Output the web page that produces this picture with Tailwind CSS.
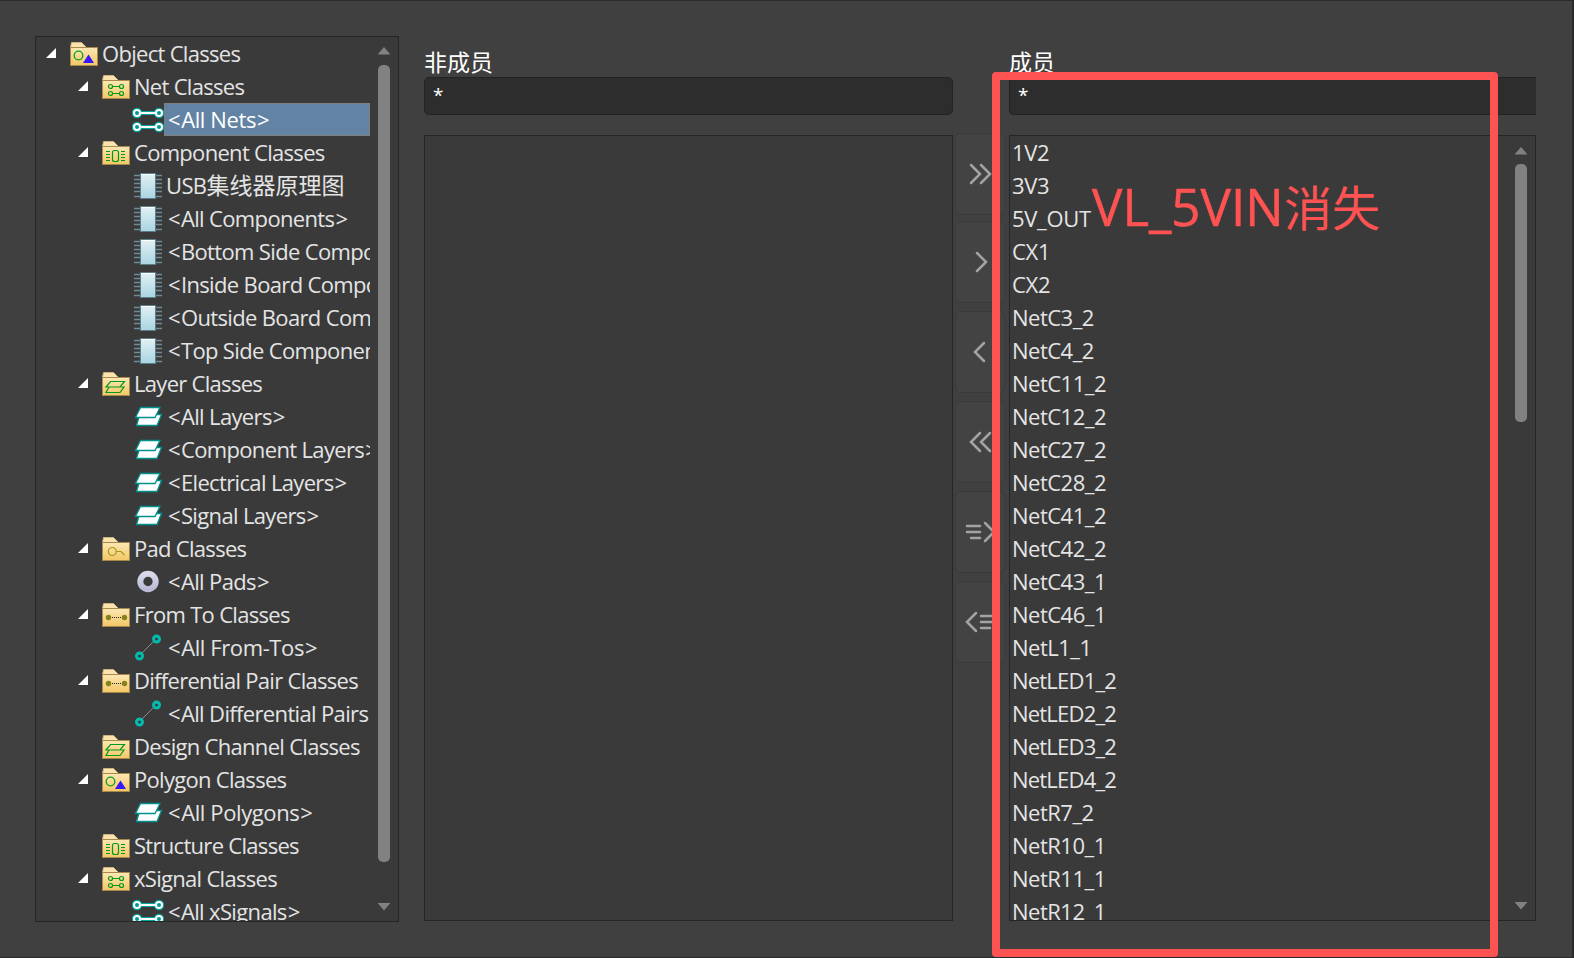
<!DOCTYPE html>
<html lang="zh">

<head>
  <meta charset="UTF-8">
  <meta name="viewport" content="width=device-width, initial-scale=1.0">
  <title>Object Class Explorer</title>
  <script src="https://cdn.jsdelivr.net/npm/@tailwindcss/browser@4"></script>
</head>

<body class="h-screen overflow-hidden bg-[#404040] font-['Open_Sans','Noto_Sans_CJK_SC',sans-serif] text-[22px] text-[#e4e4e4]">
  <!-- Icon definitions -->
  <svg class="absolute h-0 w-0">
    <defs>
      <linearGradient id="folderFill" x1="0" y1="0" x2="0" y2="1">
        <stop offset="0" stop-color="#fde7b5" />
        <stop offset="1" stop-color="#f3c766" />
      </linearGradient>
      <linearGradient id="chipFill" x1="0" y1="0" x2="0" y2="1">
        <stop offset="0" stop-color="#e2f0f4" />
        <stop offset="1" stop-color="#a9d5e2" />
      </linearGradient>
      <linearGradient id="padFill" x1="0" y1="0" x2="0" y2="1">
        <stop offset="0" stop-color="#d9d9ea" />
        <stop offset="1" stop-color="#b9bad6" />
      </linearGradient>
      <symbol id="folder" viewBox="0 0 28 24">
        <path d="M.5 5.500L1.500.5H11.500L16.500 5.500" fill="#fbe3ae" stroke="#c9b27c" />
        <rect x=".5" y="5.500" width="27" height="18" fill="url(#folderFill)" stroke="#a58a4c" />
      </symbol>
      <symbol id="shapes" viewBox="0 0 28 24">
        <use href="#folder" />
        <circle cx="8.500" cy="13.500" r="4.300" fill="none" stroke="#00a51e" stroke-width="1.300" />
        <path d="M18.500 12.500L24 21H13z" fill="#3617f5" />
      </symbol>
      <symbol id="nets" viewBox="0 0 28 24">
        <use href="#folder" />
        <g fill="none" stroke="#009a1c" stroke-width="1.200">
          <path d="M10.500 11.500H17.500M10.500 18.500H17.500" />
          <circle cx="8.500" cy="11.500" r="2" /><circle cx="19.500" cy="11.500" r="2" />
          <circle cx="8.500" cy="18.500" r="2" /><circle cx="19.500" cy="18.500" r="2" />
        </g>
      </symbol>
      <symbol id="comps" viewBox="0 0 28 24">
        <use href="#folder" />
        <g fill="none" stroke="#009a1c">
          <rect x="10.500" y="9.500" width="6" height="11" rx="2" stroke-width="1.200" />
          <path d="M4 10.500H8M4 13.500H8M4 16.500H8M4 19.500H8M19 10.500H23M19 13.500H23M19 16.500H23M19 19.500H23" />
        </g>
      </symbol>
      <symbol id="layers" viewBox="0 0 28 24">
        <use href="#folder" />
        <g fill="none" stroke="#009a1c" stroke-width="1.200">
          <path d="M8.500 9.500H22.500L18 15H4z" />
          <path d="M7 15L4 20.500H18L22 15H18.500" />
        </g>
      </symbol>
      <symbol id="pads" viewBox="0 0 28 24">
        <use href="#folder" />
        <g fill="none" stroke="#a39a16" stroke-width="1.200">
          <circle cx="10.300" cy="14.500" r="4" />
          <path d="M14.500 14.500H19L22.500 18" />
        </g>
      </symbol>
      <symbol id="fromto" viewBox="0 0 28 24">
        <use href="#folder" />
        <circle cx="6.500" cy="14.500" r="2.700" fill="#86821a" /><circle cx="22.500" cy="14.500" r="2.700" fill="#86821a" />
        <path d="M10 14.500H20" stroke="#222" stroke-dasharray="1 1" />
      </symbol>
      <symbol id="net" viewBox="0 0 32 33">
        <g stroke="#00a99d" stroke-width="4">
          <path d="M5 10H27M5 24H27" />
        </g>
        <g stroke="#fff" stroke-width="2">
          <g fill="none" stroke="#00a99d" stroke-width="1.500">
            <circle cx="5" cy="10" r="4.500" /><circle cx="27" cy="10" r="4.500" />
            <circle cx="5" cy="24" r="4.500" /><circle cx="27" cy="24" r="4.500" />
          </g>
          <path d="M8 10H24M8 24H24" />
          <g fill="#00968f">
            <circle cx="5" cy="10" r="3" /><circle cx="27" cy="10" r="3" />
            <circle cx="5" cy="24" r="3" /><circle cx="27" cy="24" r="3" />
          </g>
        </g>
      </symbol>
      <symbol id="chip" viewBox="0 0 32 33">
        <path d="M2 6.500H30M2 10.500H30M2 14.500H30M2 18.500H30M2 22.500H30M2 27.500H30" stroke="#6f8c96" stroke-width="1.700" />
        <rect x="8.500" y="4.500" width="15" height="25" fill="url(#chipFill)" stroke="#5d7f8a" />
        <path d="M9 5.500H23" stroke="#fff" />
      </symbol>
      <symbol id="layer" viewBox="0 0 32 33">
        <path d="M7 17L4.500 25.500H25L29.500 14.500H24z" fill="#fff" stroke="#00918a" stroke-width="1.300" />
        <path d="M8.500 7.500H28L23 17.500H3.500z" fill="#fff" stroke="#00918a" stroke-width="1.300" />
      </symbol>
      <symbol id="pad" viewBox="0 0 32 33">
        <circle cx="16" cy="16.500" r="7.700" fill="none" stroke="url(#padFill)" stroke-width="6" />
      </symbol>
      <symbol id="link" viewBox="0 0 32 33">
        <path d="M9 23L22 10" stroke="#8b8b8b" />
        <g fill="none" stroke="#00bcae" stroke-width="3">
          <circle cx="7.500" cy="25" r="3" /><circle cx="24.500" cy="8" r="3" />
        </g>
      </symbol>
    </defs>
  </svg>

  <div class="relative h-[958px] w-[1574px] border-t border-r-2 border-b border-[#2b2b2b]">
    <main class="flex pt-[35px] pl-[35px]">
      <!-- Class tree -->
      <section class="flex h-[886px] w-[364px] overflow-hidden border border-[#252525] bg-[#3a3a3a]">
        <div id="tree" class="w-[334px] shrink-0 overflow-hidden"></div>
        <div class="ml-2 flex w-3 flex-col">
          <svg class="mt-[10px] h-[8px] w-3" viewBox="0 0 12 8"><path d="M6 0L12.500 7.500H-.5z" fill="#818181" /></svg>
          <div class="mt-[10px] h-[797px] rounded-[5px] bg-[#818181]"></div>
          <svg class="mt-[41px] h-[8px] w-3" viewBox="0 0 12 8"><path d="M6 7.500L-.5 0H12.500z" fill="#818181" /></svg>
        </div>
      </section>

      <!-- Non-members -->
      <section class="ml-[25px] w-[529px]">
        <h2 class="mt-[10px] h-[31px] text-[23px] leading-[33px] text-white">非成员</h2>
        <div class="h-[38px] rounded-[5px] border border-[#232323] bg-[#2d2d2d] pl-[8px] text-[19px] leading-[35px] text-white">*</div>
        <div class="mt-5 h-[786px] border border-[#252525] bg-[#3a3a3a]"></div>
      </section>

      <!-- Transfer buttons -->
      <div id="buttons" class="mt-[97px] ml-[2px] flex w-[50px] flex-col gap-2"></div>

      <!-- Members -->
      <section class="ml-1 w-[527px]">
        <h2 class="mt-[10px] h-[31px] text-[23px] leading-[33px] text-white">成员</h2>
        <div class="h-[38px] rounded-l-[5px] border border-r-0 border-[#232323] bg-[#2d2d2d] pl-[8px] text-[19px] leading-[35px] text-white">*</div>
        <div class="mt-5 flex h-[786px] justify-between overflow-hidden border border-[#252525] bg-[#3a3a3a] pr-[8px] pl-[2px]">
          <div id="members"></div>
          <div class="flex w-3 flex-col">
            <svg class="mt-[11px] h-[8px] w-3" viewBox="0 0 12 8"><path d="M6 0L12.500 7.500H-.5z" fill="#818181" /></svg>
            <div class="mt-[9px] h-[258px] rounded-[5px] bg-[#818181]"></div>
            <svg class="mt-[480px] h-[8px] w-3" viewBox="0 0 12 8"><path d="M6 7.500L-.5 0H12.500z" fill="#818181" /></svg>
          </div>
        </div>
      </section>
    </main>

    <!-- Annotation -->
    <div class="absolute top-[71px] left-[992px] h-[885px] w-[506px] rounded-[4px] border-8 border-[#ff5252]"></div>
    <div class="absolute top-[169px] left-[1092px] flex items-baseline leading-[72px] whitespace-nowrap text-[#ff5252]">
      <span class="w-[192px] text-[51px] [-webkit-text-stroke:0.6px_#ff5252]">VL_5VIN</span><span class="text-[48px]">消失</span>
    </div>
  </div>

  <script>
    // [level, icon, label, expanded]
    const tree = [
      [0, 'shapes', 'Object Classes', true],
      [1, 'nets', 'Net Classes', true],
      [2, 'net', '<All Nets>'],
      [1, 'comps', 'Component Classes', true],
      [2, 'chip', 'USB集线器原理图'],
      [2, 'chip', '<All Components>'],
      [2, 'chip', '<Bottom Side Components>'],
      [2, 'chip', '<Inside Board Components>'],
      [2, 'chip', '<Outside Board Components>'],
      [2, 'chip', '<Top Side Components>'],
      [1, 'layers', 'Layer Classes', true],
      [2, 'layer', '<All Layers>'],
      [2, 'layer', '<Component Layers>'],
      [2, 'layer', '<Electrical Layers>'],
      [2, 'layer', '<Signal Layers>'],
      [1, 'pads', 'Pad Classes', true],
      [2, 'pad', '<All Pads>'],
      [1, 'fromto', 'From To Classes', true],
      [2, 'link', '<All From-Tos>'],
      [1, 'fromto', 'Differential Pair Classes', true],
      [2, 'link', '<All Differential Pairs>'],
      [1, 'layers', 'Design Channel Classes', false],
      [1, 'shapes', 'Polygon Classes', true],
      [2, 'layer', '<All Polygons>'],
      [1, 'comps', 'Structure Classes', false],
      [1, 'nets', 'xSignal Classes', true],
      [2, 'net', '<All xSignals>']
    ];
    const indent = ['pl-[10px]', 'pl-[42px]', 'pl-[96px]'];

    document.getElementById('tree').innerHTML = tree.map(([level, icon, label, open]) => {
      const text = label
        .replace(/[<>]/g, c => c === '<' ? '<span class="mr-[1px]">&lt;</span>' : '<span class="ml-[1px]">&gt;</span>')
        .replace('集线器原理图', '<span class="text-[23px] tracking-normal">集线器原理图</span>');
      if (level === 2) {
        const selected = label === '<All Nets>' ? 'bg-[#6283a3] text-white outline-1 -outline-offset-1 outline-dotted outline-[#9c7c5c]' : '';
        const pad = label.startsWith('USB') ? 'pl-[2px]' : 'pl-[4px]';
        const tracking = /Tos|Polygons|Nets/.test(label) ? 'tracking-[-0.4px]' : 'tracking-[-0.65px]';
        return `<div class="flex h-[33px] ${indent[2]}">
          <svg class="h-[33px] w-8 shrink-0"><use href="#${icon}" /></svg>
          <div class="${pad} ${selected} ${tracking} min-w-0 grow overflow-hidden leading-[33px] whitespace-nowrap">${text}</div>
        </div>`;
      }
      return `<div class="flex h-[33px] ${indent[level]}">
        <svg class="mt-[11px] h-[10px] w-[10px] shrink-0" viewBox="0 0 10 10">${open ? '<path d="M10 0V10H0z" fill="#fff" />' : ''}</svg>
        <svg class="mt-[5px] ml-[14px] h-6 w-7 shrink-0"><use href="#${icon}" /></svg>
        <div class="ml-1 leading-[33px] tracking-[-0.7px] whitespace-nowrap">${text}</div>
      </div>`;
    }).join('');

    const members = ['1V2', '3V3', '5V_OUT', 'CX1', 'CX2', 'NetC3_2', 'NetC4_2', 'NetC11_2', 'NetC12_2', 'NetC27_2',
      'NetC28_2', 'NetC41_2', 'NetC42_2', 'NetC43_1', 'NetC46_1', 'NetL1_1', 'NetLED1_2', 'NetLED2_2', 'NetLED3_2',
      'NetLED4_2', 'NetR7_2', 'NetR10_1', 'NetR11_1', 'NetR12_1'];
    document.getElementById('members').innerHTML = members.map(m => {
      const tracking = m.startsWith('NetLED') ? 'tracking-[-0.8px]' : m.startsWith('Net') ? 'tracking-[-0.5px]' : 'tracking-[-0.3px]';
      return `<div class="${tracking} h-[33px] leading-[33px]">${m}</div>`;
    }).join('');

    // Arrow strokes, drawn in the button's own 50x82 box
    const arrows = [
      'M16 32L25 41L16 50M26 32L35 41L26 50',
      'M22 32L31 41L22 50',
      'M29 32L20 41L29 50',
      'M25 32L16 41L25 50M35 32L26 41L35 50',
      'M12 35H25M12 41H25M16 47H25M30 32L39 41L30 50',
      'M21 32L12 41L21 50M26 35H39M26 41H39M26 47H35'
    ];
    document.getElementById('buttons').innerHTML = arrows.map((d, i) =>
      `<button class="${i === 1 ? '-mt-[2px]' : ''} h-[82px] w-[50px] rounded-[5px] border border-[#3a3a3a] bg-[#434343]">
        <svg class="h-full w-full" viewBox="1 1 48 80"><path d="${d}" fill="none" stroke="#a3a3a3" stroke-width="2.500" stroke-linecap="round" /></svg>
      </button>`).join('');
  </script>
</body>

</html>
